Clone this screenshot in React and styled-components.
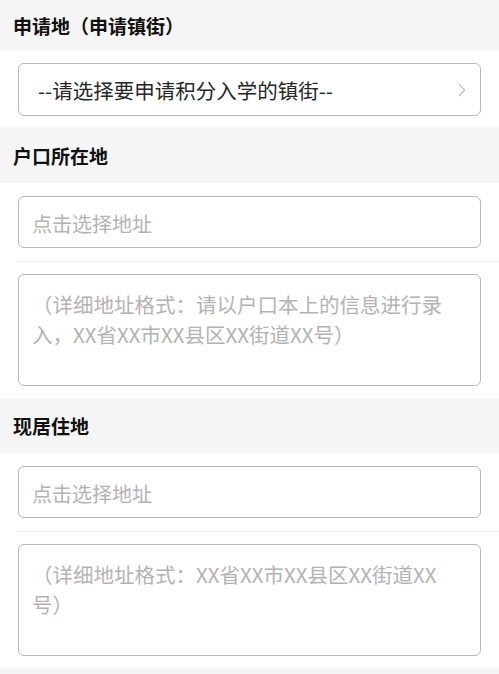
import React from 'react'
import styled, { createGlobalStyle } from 'styled-components'

const GlobalStyle = createGlobalStyle`
  html, body {
    margin: 0;
    padding: 0;
    background: #ffffff;
  }
  body {
    font-family: "Noto Sans CJK SC", "Noto Sans", sans-serif;
  }
  * { box-sizing: border-box; }
`

const Page = styled.div`
  width: 499px;
  min-height: 674px;
  background: #f5f5f5;
`

const SectionHeader = styled.div`
  height: ${(p) => p.$h}px;
  display: flex;
  align-items: center;
  padding-left: 13px;
  background: #f5f5f5;
  color: #111;
  font-size: 19px;
  font-weight: 700;
`

const Row = styled.div`
  background: #fff;
  padding: ${(p) => p.$pt}px 18px ${(p) => p.$pb}px 18px;
`

const DividerRow = styled.div`
  background: #fff;
  padding-left: 18px;
`

const DividerInner = styled.div`
  padding: ${(p) => p.$pt}px 18px ${(p) => p.$pb}px 0;
  border-bottom: 1px solid #efefef;
`

const boxBorder = `
  border: 1px solid #b9b9b9;
  border-radius: 6px;
  background: #fff;
`

const Select = styled.div`
  ${boxBorder}
  height: 53px;
  display: flex;
  align-items: center;
  justify-content: space-between;
  padding: 0 14px 0 19px;
  color: #262626;
  font-size: 20.5px;
  cursor: pointer;
`

const Chevron = styled.svg`
  width: 8px;
  height: 14px;
  flex: none;
`

const Input = styled.input`
  ${boxBorder}
  display: block;
  width: 100%;
  height: 52px;
  padding: 3px 14px 0 13px;
  font-family: inherit;
  font-size: 20px;
  color: #333;
  outline: none;
  &::placeholder {
    color: #b3b3b3;
  }
`

const TextArea = styled.textarea`
  ${boxBorder}
  display: block;
  width: 100%;
  height: 112px;
  padding: 14px 20px 0 13px;
  font-family: inherit;
  font-size: 20.5px;
  line-height: 30px;
  color: #333;
  resize: none;
  outline: none;
  &::placeholder {
    color: #b3b3b3;
  }
`

const AddressBlock = ({ detail }) => (
  <>
    <DividerRow>
      <DividerInner $pt={13} $pb={13}>
        <Input placeholder="点击选择地址" readOnly />
      </DividerInner>
    </DividerRow>
    <Row $pt={12} $pb={12}>
      <TextArea placeholder={detail} />
    </Row>
  </>
)

export default function App() {
  return (
    <>
      <GlobalStyle />
      <Page>
        <SectionHeader $h={51}>申请地（申请镇街）</SectionHeader>
        <Row $pt={12} $pb={11}>
          <Select>
            <span>--请选择要申请积分入学的镇街--</span>
            <Chevron viewBox="0 0 8 14">
              <polyline points="1.5,1.5 6.5,7 1.5,12.5" fill="none" stroke="#c4c4c4" strokeWidth="1.5" strokeLinecap="round" strokeLinejoin="round" />
            </Chevron>
          </Select>
        </Row>
        <SectionHeader $h={56}>户口所在地</SectionHeader>
        <AddressBlock detail={'（详细地址格式：请以户口本上的信息进行录\n入，XX省XX市XX县区XX街道XX号）'} />
        <SectionHeader $h={55}>现居住地</SectionHeader>
        <AddressBlock detail={'（详细地址格式：XX省XX市XX县区XX街道XX\n号）'} />
      </Page>
    </>
  )
}
